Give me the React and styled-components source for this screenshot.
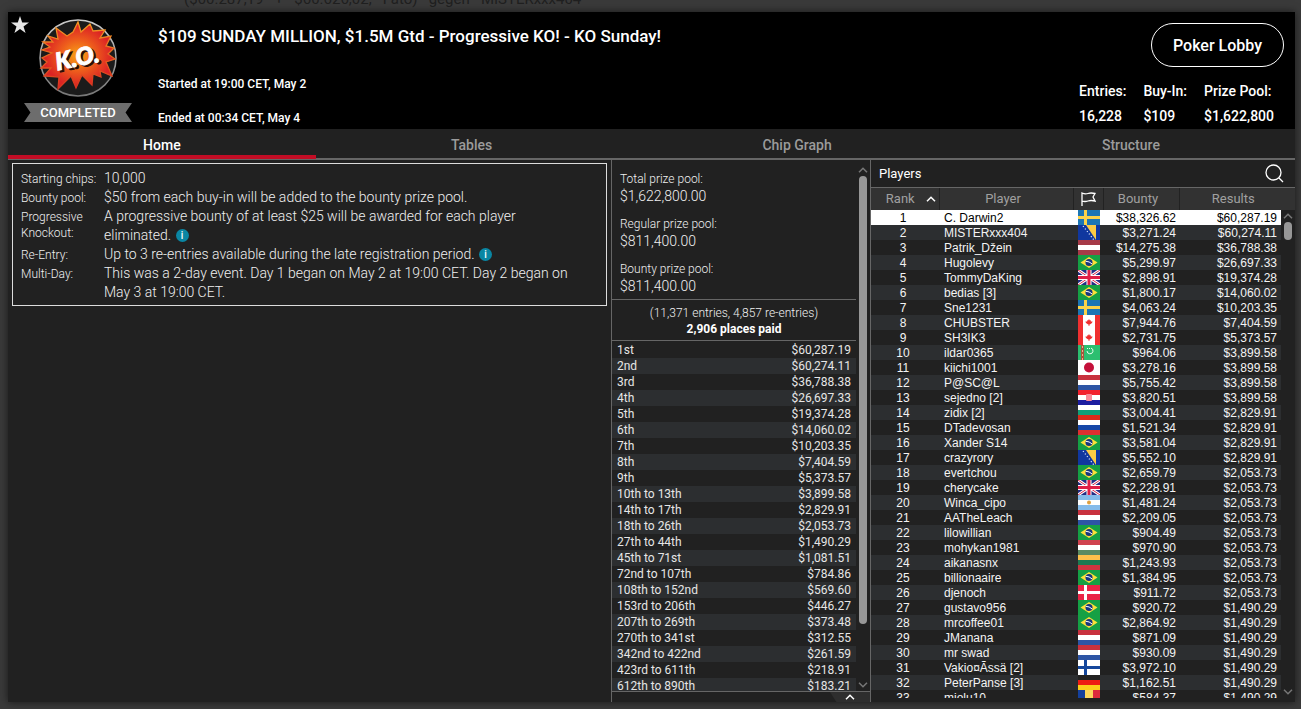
import React from 'react';
import styled, { createGlobalStyle, css } from 'styled-components';

const GlobalStyle = createGlobalStyle`
  * {
    box-sizing: border-box;
  }

  body {
    margin: 0;
    background: #3a3a3a;
    color: #fff;
    font-family: Roboto, "Liberation Sans", sans-serif;
    overflow: hidden;
  }
`;

const Page = styled.div`
  position: relative;
  height: 100vh;
  padding: 12px 6px 7px 8px;
`;

const Behind = styled.p`
  position: absolute;
  top: -11px;
  left: 184px;
  margin: 0;
  color: #202020;
  font-size: 15px;
  line-height: 20px;
  white-space: pre;
`;

const Window = styled.div`
  position: relative;
  display: flex;
  flex-direction: column;
  height: 100%;
  background: #212121;
  box-shadow: 0 0 8px rgba(0, 0, 0, 0.6);
`;

const Header = styled.header`
  display: flex;
  flex: none;
  height: 117px;
  background: #000;
  font-weight: 500;
`;

const StarButton = styled.button`
  width: 24px;
  height: 26px;
  padding: 3px 0 0;
  border: 0;
  background: none;
`;

const Badge = styled.div`
  display: flex;
  flex-direction: column;
  align-items: center;
  width: 108px;
  margin-left: -8px;
  padding-top: 7px;
`;

const Ribbon = styled.span`
  width: 108px;
  margin-top: 6px;
  background: #6d6d6d;
  clip-path: polygon(0 0, 100% 0, 94% 50%, 100% 100%, 0 100%, 6% 50%);
  font-size: 13px;
  line-height: 19px;
  text-align: center;
`;

const Titles = styled.div`
  flex: 1;
  padding: 12px 0 0 26px;

  h1 {
    margin: 0 0 26px;
    font-size: 17px;
    font-weight: 500;
    line-height: 24px;
  }

  p {
    margin: 0 0 14px;
    font-size: 12px;
    line-height: 20px;
  }
`;

const Summary = styled.div`
  display: flex;
  flex-direction: column;
  align-items: flex-end;
  padding: 11px 11px 0 0;
`;

const LobbyButton = styled.button`
  width: 133px;
  height: 44px;
  border: 1px solid #fff;
  border-radius: 22px;
  background: #000;
  color: #fff;
  font: 500 16px Roboto, sans-serif;
`;

const Stats = styled.dl`
  display: flex;
  gap: 17px;
  margin: 12px 10px 0 0;
  font-size: 14px;
  line-height: 25px;

  dd {
    margin: 0;
  }
`;

const Tabs = styled.nav`
  display: flex;
  flex: none;
  height: 31px;
  border-bottom: 2px solid #666;
`;

const Tab = styled.button`
  flex: 1 1 auto;
  height: 30px;
  padding: 5px 0 0;
  border: 0;
  border-bottom: 4px solid ${props => (props.$active ? '#c20d25' : 'transparent')};
  background: none;
  color: ${props => (props.$active ? '#fff' : '#9b9b9b')};
  font: 500 14px Roboto, sans-serif;
`;

const Columns = styled.main`
  display: flex;
  flex: 1;
  min-height: 0;
`;

const InfoColumn = styled.section`
  flex: 1;
  padding: 3px 4px;
`;

const InfoBox = styled.dl`
  display: grid;
  grid-template-columns: 83px 1fr;
  margin: 0;
  padding: 5px 8px 3px;
  border: 1px solid #ddd;
  color: #f0f0f0;
  font-weight: 300;

  dt {
    padding-top: 2px;
    font-size: 12px;
    line-height: 16px;
  }

  dd {
    margin: 0;
    padding-right: 20px;
    font-size: 14px;
    line-height: 19px;
  }
`;

const InfoDot = styled.button`
  width: 13px;
  height: 13px;
  margin-left: 1px;
  padding: 0;
  border: 0;
  border-radius: 50%;
  background: #0a86a3;
  color: #fff;
  font: 500 10px/13px Roboto, sans-serif;
  vertical-align: 1px;
`;

const PrizeColumn = styled.section`
  display: flex;
  flex: none;
  flex-direction: column;
  width: 259px;
  border-left: 1px solid #666;
`;

const PrizeScroller = styled.div`
  display: flex;
  flex: 1;
  min-height: 0;
  border-bottom: 1px solid #666;
`;

const PrizeContent = styled.div`
  flex: 1;
  overflow: hidden;
  font-weight: 300;
`;

const Pools = styled.dl`
  margin: 0;
  padding: 10px 8px 4px;
  border-bottom: 1px solid #666;
  color: #f0f0f0;

  dt {
    font-size: 12px;
    line-height: 18px;
  }

  dd {
    margin: 0 0 10px;
    font-size: 14px;
    line-height: 17px;
  }

  dd:last-child {
    margin: 0;
  }
`;

const Places = styled.p`
  margin: 0;
  padding: 5px 0 3px;
  border-bottom: 1px solid #666;
  color: #f0f0f0;
  font-size: 12px;
  line-height: 16px;
  text-align: center;

  strong {
    display: block;
    color: #fff;
    font-size: 12px;
    font-weight: 700;
  }
`;

const PayoutTable = styled.table`
  width: 100%;
  margin-top: 1px;
  border-collapse: collapse;
  color: #e6e6e6;
  font-size: 12px;
  font-weight: 400;

  tr:nth-child(even) {
    background: #2c2e30;
  }

  td {
    height: 16px;
    padding: 0 5px;
    line-height: 16px;
  }

  td:last-child {
    text-align: right;
  }
`;

const ScrollTrack = styled.div`
  display: flex;
  flex: none;
  flex-direction: column;
  align-items: center;
  width: 14px;
  padding: 7px 0 3px;
  color: #777;

  svg {
    flex: none;
  }
`;

const Thumb = styled.div`
  flex: none;
  width: 8px;
  margin-top: 3px;
  border-radius: 4px;
  background: #979797;
  ${props =>
    props.$small
      ? css`
          height: 18px;
        `
      : css`
          height: 86%;
        `}
`;

const TrackRest = styled.div`
  flex: 1;
`;

const Drawer = styled.div`
  display: flex;
  flex: none;
  justify-content: flex-end;
  height: 10px;
`;

const DrawerButton = styled.button`
  display: flex;
  align-items: center;
  justify-content: center;
  width: 40px;
  padding: 0;
  border: 0;
  background: #2e2e2e;
  clip-path: polygon(0 0, 100% 0, 100% 100%, 16% 100%);
  color: #fff;
`;

const PlayersColumn = styled.section`
  display: flex;
  flex: none;
  flex-direction: column;
  width: 425px;
  padding-bottom: 4px;
  border-left: 1px solid #666;
`;

const PlayersBar = styled.div`
  display: flex;
  flex: none;
  align-items: center;
  justify-content: space-between;
  height: 28px;
  padding: 0 11px 0 8px;
  border-bottom: 1px solid #666;

  h2 {
    margin: 0;
    font-size: 13px;
    font-weight: 400;
  }

  button {
    height: 20px;
    padding: 0;
    border: 0;
    background: none;
    color: #fff;
  }
`;

const PlayersBody = styled.div`
  display: flex;
  flex: 1;
  min-height: 0;
  overflow: hidden;
`;

const PlayersTable = styled.table`
  flex: 1;
  align-self: flex-start;
  table-layout: fixed;
  border-collapse: collapse;
  font-family: "Liberation Sans", Arial, sans-serif;
  font-size: 12px;

  th {
    height: 22px;
    padding: 0 6px 2px 0;
    border-right: 1px solid #222;
    background: #323232;
    color: #a0a0a0;
    font: 400 13px Roboto, sans-serif;
  }

  th:first-child {
    padding-right: 0;
    padding-left: 12px;
    white-space: nowrap;
  }

  th:nth-child(3) {
    padding-right: 0;
  }

  th:last-child {
    padding-right: 0;
    padding-left: 6px;
    border-right: 0;
  }

  th svg {
    color: #fff;
    vertical-align: middle;
  }

  th:first-child svg {
    margin-left: 11px;
  }
`;

const PlayerRow = styled.tr`
  background: ${props => (props.$first ? '#fff' : props.$shade ? '#2c2e30' : 'transparent')};
  color: ${props => (props.$first ? '#000' : '#f4f4f4')};

  td {
    height: 15px;
    padding: 1px 0 0;
    line-height: 14px;
    text-align: right;
    white-space: nowrap;
  }

  td:nth-child(1) {
    padding-right: 4px;
    text-align: center;
  }

  td:nth-child(2) {
    padding-left: 5px;
    text-align: left;
  }

  td:nth-child(3) {
    padding: 0 0 0 5px;
  }

  td:nth-child(4) {
    padding-right: 3px;
  }

  td:nth-child(5) {
    padding-right: 4px;
  }

  svg {
    display: block;
  }
`;

const PlayersTrack = styled.div`
  display: flex;
  flex: none;
  flex-direction: column;
  width: 14px;
`;

const TrackHead = styled.div`
  flex: none;
  height: 22px;
  background: #323232;
`;

const PlayersScroll = styled(ScrollTrack)`
  flex: 1;
  padding-top: 3px;
`;

const payouts = [
  ['1st', '$60,287.19'],
  ['2nd', '$60,274.11'],
  ['3rd', '$36,788.38'],
  ['4th', '$26,697.33'],
  ['5th', '$19,374.28'],
  ['6th', '$14,060.02'],
  ['7th', '$10,203.35'],
  ['8th', '$7,404.59'],
  ['9th', '$5,373.57'],
  ['10th to 13th', '$3,899.58'],
  ['14th to 17th', '$2,829.91'],
  ['18th to 26th', '$2,053.73'],
  ['27th to 44th', '$1,490.29'],
  ['45th to 71st', '$1,081.51'],
  ['72nd to 107th', '$784.86'],
  ['108th to 152nd', '$569.60'],
  ['153rd to 206th', '$446.27'],
  ['207th to 269th', '$373.48'],
  ['270th to 341st', '$312.55'],
  ['342nd to 422nd', '$261.59'],
  ['423rd to 611th', '$218.91'],
  ['612th to 890th', '$183.21'],
];

const players = [
  ['C. Darwin2', 'se', '$38,326.62', '$60,287.19'],
  ['MISTERxxx404', 'ba', '$3,271.24', '$60,274.11'],
  ['Patrik_Džein', 'lv', '$14,275.38', '$36,788.38'],
  ['Hugolevy', 'br', '$5,299.97', '$26,697.33'],
  ['TommyDaKing', 'gb', '$2,898.91', '$19,374.28'],
  ['bedias [3]', 'br', '$1,800.17', '$14,060.02'],
  ['Sne1231', 'se', '$4,063.24', '$10,203.35'],
  ['CHUBSTER', 'ca', '$7,944.76', '$7,404.59'],
  ['SH3IK3', 'ca', '$2,731.75', '$5,373.57'],
  ['ildar0365', 'tm', '$964.06', '$3,899.58'],
  ['kiichi1001', 'jp', '$3,278.16', '$3,899.58'],
  ['P@SC@L', 'nl', '$5,755.42', '$3,899.58'],
  ['sejedno [2]', 'hr', '$3,820.51', '$3,899.58'],
  ['zidix [2]', 'bg', '$3,004.41', '$2,829.91'],
  ['DTadevosan', 'ru', '$1,521.34', '$2,829.91'],
  ['Xander S14', 'br', '$3,581.04', '$2,829.91'],
  ['crazyrory', 'ba', '$5,552.10', '$2,829.91'],
  ['evertchou', 'br', '$2,659.79', '$2,053.73'],
  ['cherycake', 'gb', '$2,228.91', '$2,053.73'],
  ['Winca_cipo', 'ar', '$1,481.24', '$2,053.73'],
  ['AATheLeach', 'nl', '$2,209.05', '$2,053.73'],
  ['lilowillian', 'br', '$904.49', '$2,053.73'],
  ['mohykan1981', 'hu', '$970.90', '$2,053.73'],
  ['aikanasnx', 'lt', '$1,243.93', '$2,053.73'],
  ['billionaaire', 'br', '$1,384.95', '$2,053.73'],
  ['djenoch', 'dk', '$911.72', '$2,053.73'],
  ['gustavo956', 'br', '$920.72', '$1,490.29'],
  ['mrcoffee01', 'br', '$2,864.92', '$1,490.29'],
  ['JManana', 'nl', '$871.09', '$1,490.29'],
  ['mr swad', 'nl', '$930.09', '$1,490.29'],
  ['Vakio¤Ãssä [2]', 'fi', '$3,972.10', '$1,490.29'],
  ['PeterPanse [3]', 'de', '$1,162.51', '$1,490.29'],
  ['miolu10', 'ro', '$584.37', '$1,490.29'],
];

const stripes = {
  lv: ['#a63a48', '#fff', '#a63a48'],
  nl: ['#c8313e', '#fff', '#2d55a5'],
  hr: ['#f2212d', '#fff', '#1d1da0'],
  bg: ['#fff', '#10a078', '#dc2b1a'],
  ru: ['#fff', '#1547a8', '#dc3030'],
  ar: ['#85bbea', '#fff', '#85bbea'],
  hu: ['#d0434f', '#fff', '#5a8a62'],
  lt: ['#fdc04c', '#1c7a52', '#cf3540'],
  de: ['#222', '#ee1c12', '#fccf1a'],
};

const Cross = ({ bg, fg }) => (
  <>
    <rect width="22" height="15" fill={bg} />
    <path d="M6 0h3v6h13v3H9v6H6V9H0V6h6z" fill={fg} />
  </>
);

const flagArt = {
  se: <Cross bg="#1c76b4" fg="#fbd34a" />,
  dk: <Cross bg="#ea2446" fg="#fff" />,
  fi: <Cross bg="#fff" fg="#15479c" />,
  ba: (
    <>
      <rect width="22" height="15" fill="#10379f" />
      <path d="M8 0h10v15z" fill="#fccb45" />
      <path d="M5 1l11 14" stroke="#dfe8ff" strokeWidth="1.2" strokeDasharray="1.2 2" />
    </>
  ),
  br: (
    <>
      <rect width="22" height="15" fill="#15a044" />
      <path d="M11 2l8.5 5.5L11 13 2.5 7.5z" fill="#fbe13a" />
      <circle cx="11" cy="7.5" r="3.5" fill="#17357f" />
      <path d="M7.8 6.3q3.5 0 6.2 2.6" stroke="#fff" fill="none" />
    </>
  ),
  gb: (
    <>
      <rect width="22" height="15" fill="#252c84" />
      <path d="M0 0l22 15M22 0L0 15" stroke="#fff" strokeWidth="3" />
      <path d="M0 0l22 15M22 0L0 15" stroke="#d8264a" />
      <path d="M11 0v15M0 7.5h22" stroke="#fff" strokeWidth="5" />
      <path d="M11 0v15M0 7.5h22" stroke="#e01f47" strokeWidth="3" />
    </>
  ),
  ca: (
    <>
      <rect width="22" height="15" fill="#f03030" />
      <rect x="5" width="12" height="15" fill="#fff" />
      <path
        d="M11 4l.9 1.6 1-.4-.1 1.4 1.8-.2-.6 1.600-2.200 1.500h-.4v1.600h-.8V9.500h-.4L8 8l-.6-1.600 1.800.2-.1-1.400 1 .4z"
        fill="#f03030"
      />
    </>
  ),
  tm: (
    <>
      <rect width="22" height="15" fill="#2cbf70" />
      <rect x="3" width="3" height="15" fill="#a8563c" />
      <path d="M4.5 1v14" stroke="#e8b090" strokeDasharray="2 2" />
      <path d="M13 3a3 3 0 1 1-4 3" stroke="#e8fff0" fill="none" />
      <path d="M9 3.5h3" stroke="#e8fff0" strokeDasharray="1 1" />
    </>
  ),
  jp: (
    <>
      <rect width="22" height="15" fill="#fff" />
      <circle cx="11" cy="7.5" r="5" fill="#c4103a" />
    </>
  ),
  ro: (
    <>
      <rect width="8" height="15" fill="#15409c" />
      <rect x="7" width="8" height="15" fill="#fcd65c" />
      <rect x="15" width="7" height="15" fill="#dc2a3c" />
    </>
  ),
};

const Flag = ({ code }) => (
  <svg width="22" height="15" viewBox="0 0 22 15" aria-hidden="true">
    {flagArt[code] ||
      stripes[code].map((fill, i) => <rect key={i} y={i * 5} width="22" height="5" fill={fill} />)}
    {code === 'hr' && <rect x="8" y="4" width="6" height="7" rx="1" fill="#f98a98" />}
    {code === 'ar' && <circle cx="11" cy="7.5" r="2" fill="#dea040" />}
  </svg>
);

const Chevron = ({ down }) => (
  <svg width="10" height="6" viewBox="0 0 10 6" fill="none" stroke="currentColor" strokeWidth="1.5" aria-hidden="true">
    <path d={down ? 'M1 .8l4 4 4-4' : 'M1 5.2l4-4 4 4'} />
  </svg>
);

const KoLogo = () => (
  <svg width="78" height="78" viewBox="0 0 78 78" role="img" aria-label="K.O.">
    <defs>
      <radialGradient id="burst">
        <stop offset="0" stopColor="#f9a516" />
        <stop offset=".45" stopColor="#ee5f1c" />
        <stop offset=".9" stopColor="#dc2424" />
      </radialGradient>
      <linearGradient id="edge" x2="0" y2="1">
        <stop offset="0" stopColor="#f59a22" />
        <stop offset="1" stopColor="#d8311f" />
      </linearGradient>
      <linearGradient id="ring" x2="0" y2="1">
        <stop offset="0" stopColor="#ccc" />
        <stop offset="1" stopColor="#777" />
      </linearGradient>
    </defs>
    <circle cx="39" cy="39" r="38" fill="#1b1b1b" stroke="url(#ring)" strokeWidth="1.5" />
    <path
      d="M17 9L28 17 34 13 39 3 42 13 51 5 54 12 66 11 61 19 72 17 67 27 75 29 69 35 76 40 67 43 73 57 61 52 62 58 54 55 53 66 43 56 37 69 32 57 19 70 20 58 5 57 12 49 2 49 8 43 3 39 13 34 3 31 11 28 4 23 14 23 9 17 19 20z"
      fill="url(#burst)"
      stroke="url(#edge)"
      strokeWidth="1.3"
    />
    <g fontFamily="Lato, sans-serif" fontWeight="900" fontStyle="italic" fontSize="24" transform="rotate(-12 39 39)">
      <text x="18" y="49" fill="#2a0d08" stroke="#2a0d08">K.O.</text>
      <text x="16" y="47" fill="#fff" stroke="#fff">K.O.</text>
    </g>
  </svg>
);

const App = () => (
  <>
    <GlobalStyle />
    <Page>
      <Behind>{'($60.287,19   +   $60.626,02,   Fato)   gegen   MISTERxxx404'}</Behind>
      <Window>
        <Header>
          <StarButton aria-label="Favourite">
            <svg width="18" height="18" viewBox="0 0 18 18">
              <path d="M9 0l2.2 6.4H18l-5.5 4 2.1 6.6L9 13l-5.6 4 2.1-6.6L0 6.400h6.800z" fill="#e6e6e6" />
            </svg>
          </StarButton>
          <Badge>
            <KoLogo />
            <Ribbon>COMPLETED</Ribbon>
          </Badge>
          <Titles>
            <h1>$109 SUNDAY MILLION, $1.5M Gtd - Progressive KO! - KO Sunday!</h1>
            <p>Started at 19:00 CET, May 2</p>
            <p>Ended at 00:34 CET, May 4</p>
          </Titles>
          <Summary>
            <LobbyButton>Poker Lobby</LobbyButton>
            <Stats>
              <div>
                <dt>Entries:</dt>
                <dd>16,228</dd>
              </div>
              <div>
                <dt>Buy-In:</dt>
                <dd>$109</dd>
              </div>
              <div>
                <dt>Prize Pool:</dt>
                <dd>$1,622,800</dd>
              </div>
            </Stats>
          </Summary>
        </Header>
        <Tabs>
          <Tab $active>Home</Tab>
          <Tab>Tables</Tab>
          <Tab>Chip Graph</Tab>
          <Tab>Structure</Tab>
        </Tabs>
        <Columns>
          <InfoColumn>
            <InfoBox>
              <dt>Starting chips:</dt>
              <dd>10,000</dd>
              <dt>Bounty pool:</dt>
              <dd>$50 from each buy-in will be added to the bounty prize pool.</dd>
              <dt>Progressive Knockout:</dt>
              <dd>
                A progressive bounty of at least $25 will be awarded for each player eliminated. <InfoDot>i</InfoDot>
              </dd>
              <dt>Re-Entry:</dt>
              <dd>
                Up to 3 re-entries available during the late registration period. <InfoDot>i</InfoDot>
              </dd>
              <dt>Multi-Day:</dt>
              <dd>This was a 2-day event. Day 1 began on May 2 at 19:00 CET. Day 2 began on May 3 at 19:00 CET.</dd>
            </InfoBox>
          </InfoColumn>
          <PrizeColumn>
            <PrizeScroller>
              <PrizeContent>
                <Pools>
                  <dt>Total prize pool:</dt>
                  <dd>$1,622,800.00</dd>
                  <dt>Regular prize pool:</dt>
                  <dd>$811,400.00</dd>
                  <dt>Bounty prize pool:</dt>
                  <dd>$811,400.00</dd>
                </Pools>
                <Places>
                  (11,371 entries, 4,857 re-entries)
                  <strong>2,906 places paid</strong>
                </Places>
                <PayoutTable>
                  <tbody>
                    {payouts.map(([place, prize]) => (
                      <tr key={place}>
                        <td>{place}</td>
                        <td>{prize}</td>
                      </tr>
                    ))}
                  </tbody>
                </PayoutTable>
              </PrizeContent>
              <ScrollTrack>
                <Chevron />
                <Thumb />
                <TrackRest />
                <Chevron down />
              </ScrollTrack>
            </PrizeScroller>
            <Drawer>
              <DrawerButton aria-label="Expand">
                <Chevron />
              </DrawerButton>
            </Drawer>
          </PrizeColumn>
          <PlayersColumn>
            <PlayersBar>
              <h2>Players</h2>
              <button aria-label="Search">
                <svg width="19" height="19" viewBox="0 0 19 19" fill="none" stroke="currentColor" strokeWidth="1.3">
                  <circle cx="8.5" cy="8.5" r="7.5" />
                  <path d="M14 14l4 4" />
                </svg>
              </button>
            </PlayersBar>
            <PlayersBody>
              <PlayersTable>
                <colgroup>
                  <col width="68" />
                  <col width="134" />
                  <col width="30" />
                  <col width="76" />
                  <col width="102" />
                </colgroup>
                <thead>
                  <tr>
                    <th>
                      Rank
                      <Chevron />
                    </th>
                    <th>Player</th>
                    <th aria-label="Country">
                      <svg width="15" height="14" viewBox="0 0 15 14" fill="none" stroke="currentColor" strokeWidth="1.3">
                        <path d="M1 14V1q3 1.5 6 .5t7 0l-2 3.500 2 4q-4-1-7 0t-6 0" />
                      </svg>
                    </th>
                    <th>Bounty</th>
                    <th>Results</th>
                  </tr>
                </thead>
                <tbody>
                  {players.map(([name, flag, bounty, result], i) => (
                    <PlayerRow key={name} $first={i === 0} $shade={i % 2 === 1}>
                      <td>{i + 1}</td>
                      <td>{name}</td>
                      <td>
                        <Flag code={flag} />
                      </td>
                      <td>{bounty}</td>
                      <td>{result}</td>
                    </PlayerRow>
                  ))}
                </tbody>
              </PlayersTable>
              <PlayersTrack>
                <TrackHead />
                <PlayersScroll>
                  <Chevron />
                  <Thumb $small />
                  <TrackRest />
                  <Chevron down />
                </PlayersScroll>
              </PlayersTrack>
            </PlayersBody>
          </PlayersColumn>
        </Columns>
      </Window>
    </Page>
  </>
);

export default App;
